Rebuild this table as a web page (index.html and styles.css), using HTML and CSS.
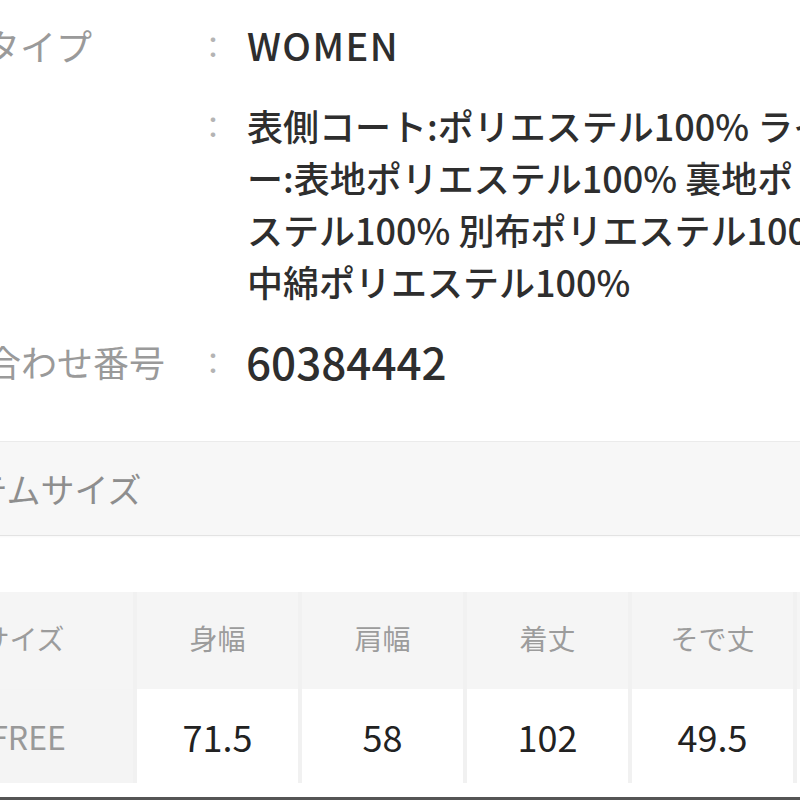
FILE: index.html
```html
<!DOCTYPE html>
<html lang="ja">
<head>
<meta charset="utf-8">
<title>アイテム詳細</title>
<link rel="stylesheet" href="styles.css">
</head>
<body>
<div class="page">
  <dl class="spec">
    <div class="row">
      <dt class="label label-short">性別タイプ</dt>
      <dd class="colon">：</dd>
      <dd class="value value-wide">WOMEN</dd>
    </div>
    <div class="row">
      <dt class="label">素材</dt>
      <dd class="colon">：</dd>
      <dd class="value">
        <span class="line">表側コート:ポリエステル100% ライナ</span>
        <span class="line">ー:表地ポリエステル100% 裏地ポリエ</span>
        <span class="line">ステル100% 別布ポリエステル100%</span>
        <span class="line">中綿ポリエステル100%</span>
      </dd>
    </div>
    <div class="row">
      <dt class="label">お問い合わせ番号</dt>
      <dd class="colon">：</dd>
      <dd class="value value-num">60384442</dd>
    </div>
  </dl>

  <div class="band">アイテムサイズ</div>

  <table class="sizes">
    <thead>
      <tr>
        <th class="head first">サイズ</th>
        <th class="head">身幅</th>
        <th class="head">肩幅</th>
        <th class="head">着丈</th>
        <th class="head">そで丈</th>
        <th class="head">ゆき丈</th>
      </tr>
    </thead>
    <tbody>
      <tr>
        <th class="size-name">FREE</th>
        <td class="num">71.5</td>
        <td class="num">58</td>
        <td class="num">102</td>
        <td class="num">49.5</td>
        <td class="num">79</td>
      </tr>
    </tbody>
  </table>

  <div class="rule"></div>
</div>
</body>
</html>
```

FILE: styles.css
```css
html, body {
  margin: 0;
  padding: 0;
  background: #ffffff;
  overflow: hidden;
}

body {
  font-family: "Noto Sans CJK JP", "Noto Sans", sans-serif;
  color: #333333;
}

.page {
  width: 1300px;
  margin-left: -119px;
}

/* spec list */
.spec {
  margin: 19px 0 0 0;
  display: flex;
  flex-direction: column;
  gap: 28px;
}

.row {
  display: grid;
  grid-template-columns: 314px 36px 1fr;
  align-items: start;
}

.label {
  margin-left: -4px;
  font-size: 36px;
  line-height: 52px;
  color: #9a9a9a;
  white-space: nowrap;
}

.label-short {
  padding-left: 35px;
}

.colon {
  margin: 0;
  font-size: 30px;
  line-height: 52px;
  color: #b4b4b4;
  text-align: center;
}

.value {
  margin: 0;
  padding-left: 16px;
  font-size: 36px;
  line-height: 52px;
  font-weight: 500;
  color: #2e2e2e;
  white-space: nowrap;
}

.value-wide {
  font-size: 38px;
  letter-spacing: 1.5px;
}

.value-num {
  font-size: 44px;
  padding-left: 15px;
}

.line {
  display: block;
}

/* section band */
.band {
  margin-top: 54px;
  height: 93px;
  display: flex;
  align-items: center;
  padding-left: 27px;
  background: #f7f7f7;
  border-top: 1px solid #ebebeb;
  border-bottom: 1px solid #e3e3e3;
  box-shadow: 0 1px 2px rgba(0, 0, 0, 0.03);
  font-size: 34px;
  color: #8e8e8e;
}

/* size table */
.sizes {
  margin-top: 56px;
  margin-left: 28px;
  border-collapse: separate;
  border-spacing: 4px 0;
  background: #f1f1f1;
}

.sizes th,
.sizes td {
  padding: 0;
  text-align: center;
  vertical-align: middle;
}

.head {
  height: 91px;
  width: 161px;
  background: #f5f5f5;
  font-size: 28px;
  font-weight: 400;
  color: #9c9c9c;
}

.sizes th.head {
  padding-bottom: 6px;
}

.head.first {
  width: 220px;
}

.size-name {
  height: 94px;
  background: #f4f4f4;
  font-size: 32px;
  font-weight: 400;
  color: #999999;
}

.sizes th.size-name {
  padding-left: 10px;
}

.num {
  height: 94px;
  background: #ffffff;
  font-size: 36px;
  color: #222222;
}

.rule {
  margin-top: 14px;
  height: 3px;
  background: #555555;
}
```
